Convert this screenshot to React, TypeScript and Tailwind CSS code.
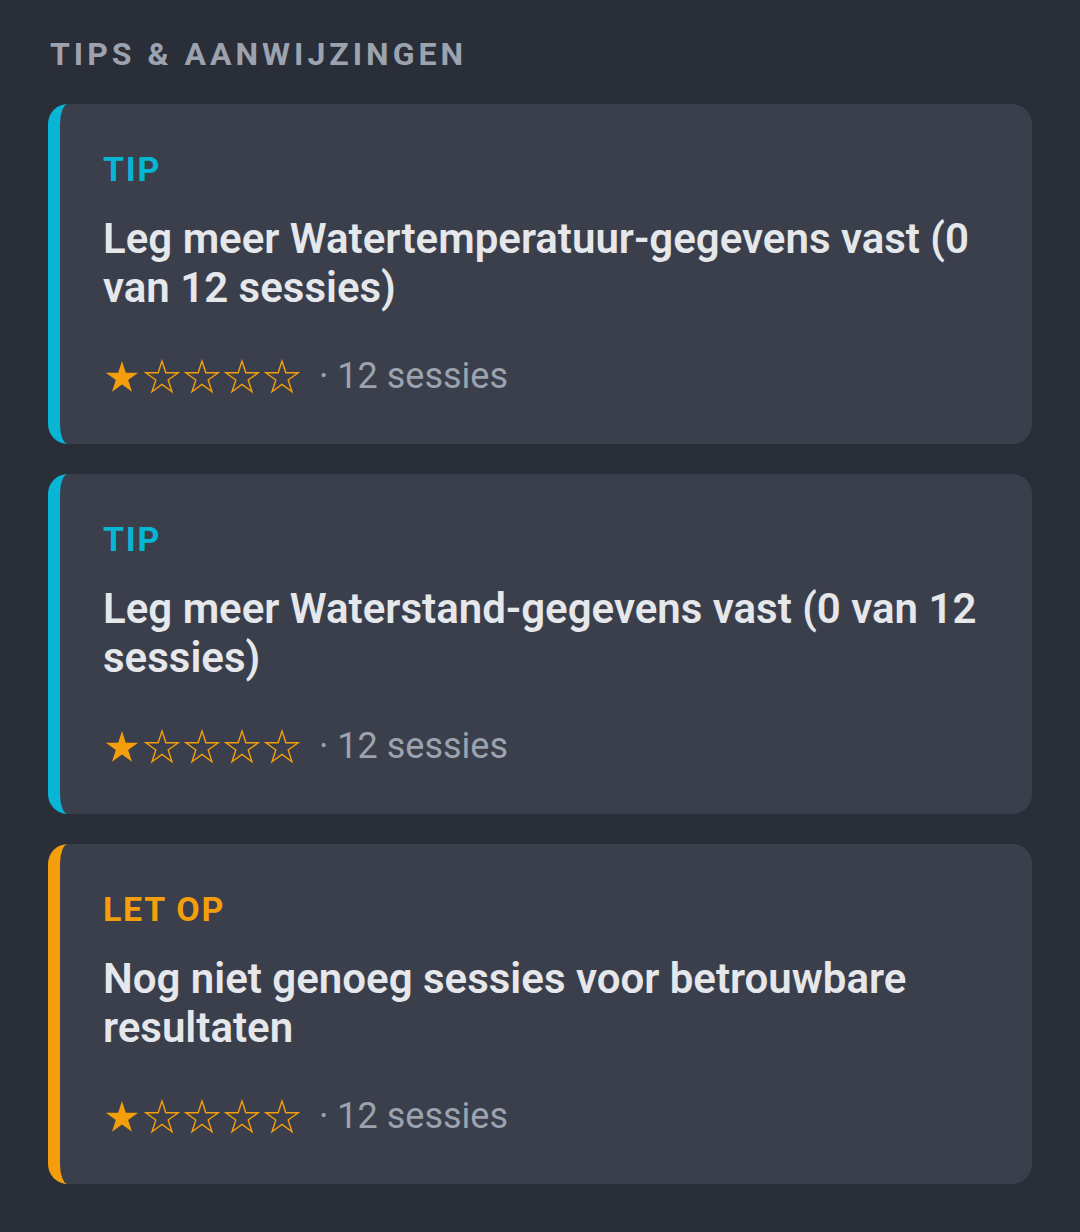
import { JSX } from "react";

interface Tip {
    kind: "tip" | "warn";
    label: string;
    text: string;
    rating: number;
    sessions: number;
}

const tips: Tip[] = [
    { kind: "tip", label: "TIP", text: "Leg meer Watertemperatuur-gegevens vast (0 van 12 sessies)", rating: 1, sessions: 12 },
    { kind: "tip", label: "TIP", text: "Leg meer Waterstand-gegevens vast (0 van 12 sessies)", rating: 1, sessions: 12 },
    { kind: "warn", label: "LET OP", text: "Nog niet genoeg sessies voor betrouwbare resultaten", rating: 1, sessions: 12 },
];

const STAR = "17,0 20.82,11.75 33.17,11.75 23.17,19.01 26.99,30.75 17,23.49 7.01,30.75 10.83,19.01 0.83,11.75 13.18,11.75";

function Star({ filled }: { filled: boolean }): JSX.Element {
    return (
        <svg width="34" height="31" viewBox="0 0 34 31" className="overflow-visible">
            <polygon
                points={STAR}
                fill={filled ? "#f59e0b" : "none"}
                stroke="#f59e0b"
                strokeWidth={filled ? 0 : 1.4}
                strokeLinejoin="miter"
            />
        </svg>
    );
}

function TipCard({ tip }: { tip: Tip }): JSX.Element {
    const accent = tip.kind === "tip" ? "border-[#06b6d4]" : "border-[#f59e0b]";
    const labelColor = tip.kind === "tip" ? "text-[#06b6d4]" : "text-[#f59e0b]";
    return (
        <div className={`rounded-[20px] border-l-[12px] ${accent} bg-[#3a3f4b] pl-[43px] pr-[44px] pt-[45px] pb-[48px]`}>
            <div className={`text-[34px] leading-[40px] font-bold tracking-[0.05em] ${labelColor}`}>
                {tip.label}
            </div>
            <div className="mt-[25px] text-[42px] leading-[49px] font-semibold text-[#e5e7eb]">
                {tip.text}
            </div>
            <div className="mt-[44px] flex items-center h-[40px]">
                <div className="flex gap-[6px] pl-[2px]">
                    {[0, 1, 2, 3, 4].map((i) => (
                        <Star key={i} filled={i < tip.rating} />
                    ))}
                </div>
                <span className="ml-[20px] text-[36px] leading-[40px] text-[#9ca3af]">
                    · {tip.sessions} sessies
                </span>
            </div>
        </div>
    );
}

export default function App(): JSX.Element {
    return (
        <div className="min-h-screen bg-[#2a2e39] px-12 pt-[34px] pb-[49px]" style={{ fontFamily: "Roboto, 'Noto Sans', sans-serif" }}>
            <h2 className="pl-[2px] text-[32px] leading-[40px] font-bold tracking-[0.125em] text-[#9ca3af]">
                TIPS &amp; AANWIJZINGEN
            </h2>
            <div className="mt-[30px] flex flex-col gap-[30px]">
                {tips.map((t, i) => (
                    <TipCard key={i} tip={t} />
                ))}
            </div>
        </div>
    );
}
